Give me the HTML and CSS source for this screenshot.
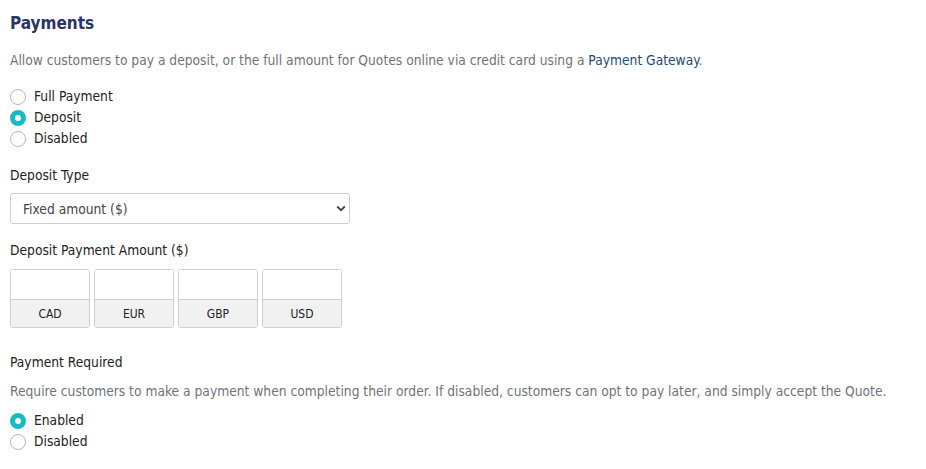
FILE: index.html
```html
<!DOCTYPE html>
<html>
<head>
<meta charset="utf-8">
<link rel="stylesheet" href="styles.css">
</head>
<body>
<div class="page">
  <h2 class="title">Payments</h2>
  <p class="desc">Allow customers to pay a deposit, or the full amount for Quotes online via credit card using a <a class="link" href="#">Payment Gateway</a>.</p>
  <div class="radios">
    <label class="radio"><span class="dot"></span>Full Payment</label>
    <label class="radio"><span class="dot on"></span>Deposit</label>
    <label class="radio"><span class="dot"></span>Disabled</label>
  </div>
  <div class="label">Deposit Type</div>
  <div class="select">
    <span>Fixed amount ($)</span>
    <svg class="chev" width="10" height="7" viewBox="0 0 10 7"><path d="M1.2 1.5 L5 5.2 L8.8 1.5" fill="none" stroke="#444" stroke-width="1.8"/></svg>
  </div>
  <div class="label">Deposit Payment Amount ($)</div>
  <div class="amounts">
    <div class="amount"><div class="field"></div><div class="cur">CAD</div></div>
    <div class="amount"><div class="field"></div><div class="cur">EUR</div></div>
    <div class="amount"><div class="field"></div><div class="cur">GBP</div></div>
    <div class="amount"><div class="field"></div><div class="cur">USD</div></div>
  </div>
  <div class="label label-req">Payment Required</div>
  <p class="desc desc2">Require customers to make a payment when completing their order. If disabled, customers can opt to pay later, and simply accept the Quote.</p>
  <div class="radios radios2">
    <label class="radio"><span class="dot on"></span>Enabled</label>
    <label class="radio"><span class="dot"></span>Disabled</label>
  </div>
</div>
</body>
</html>
```

FILE: styles.css
```css
html, body {
  margin: 0;
  padding: 0;
  background: #fff;
}
.page {
  padding: 12px 10px 0 10px;
  font-family: "DejaVu Sans Condensed", "DejaVu Sans", sans-serif;
  font-size: 13.7px;
  color: #222;
}
.title {
  margin: 0;
  font-size: 17px;
  line-height: 22px;
  font-weight: bold;
  color: #2b3467;
}
.desc {
  margin: 16px 0 0 0;
  line-height: 20px;
  color: #707478;
}
.link {
  color: #1b4a7a;
  text-decoration: none;
}
.radios {
  margin-top: 16px;
  display: flex;
  flex-direction: column;
}
.radio {
  display: flex;
  align-items: center;
  height: 21px;
  line-height: 21px;
}
.dot {
  box-sizing: border-box;
  width: 16px;
  height: 16px;
  border-radius: 50%;
  border: 1px solid #b5b8bc;
  margin-right: 8px;
  background: #fff;
}
.dot.on {
  border: 5px solid #17bcc0;
  background: #fff;
}
.label {
  margin-top: 16px;
  line-height: 20px;
}
.select {
  margin-top: 8px;
  box-sizing: border-box;
  width: 340px;
  height: 31px;
  border: 1px solid #ccd0d4;
  border-radius: 3px;
  display: flex;
  align-items: center;
  justify-content: space-between;
  padding: 0 3px 0 12px;
  color: #444;
}
.amounts {
  margin-top: 9px;
  display: flex;
  gap: 4px;
}
.amount {
  box-sizing: border-box;
  width: 80px;
  height: 59px;
  border: 1px solid #ccd0d4;
  border-radius: 3px;
  display: flex;
  flex-direction: column;
  overflow: hidden;
}
.field {
  height: 29px;
  border-bottom: 1px solid #ccd0d4;
  background: #fff;
}
.cur {
  flex: 1;
  background: #f1f1f1;
  display: flex;
  align-items: center;
  justify-content: center;
  font-size: 12px;
  color: #222;
}
.label-req {
  margin-top: 24px;
}
.desc2 {
  margin-top: 9px;
}
.radios2 {
  margin-top: 9px;
}
```
